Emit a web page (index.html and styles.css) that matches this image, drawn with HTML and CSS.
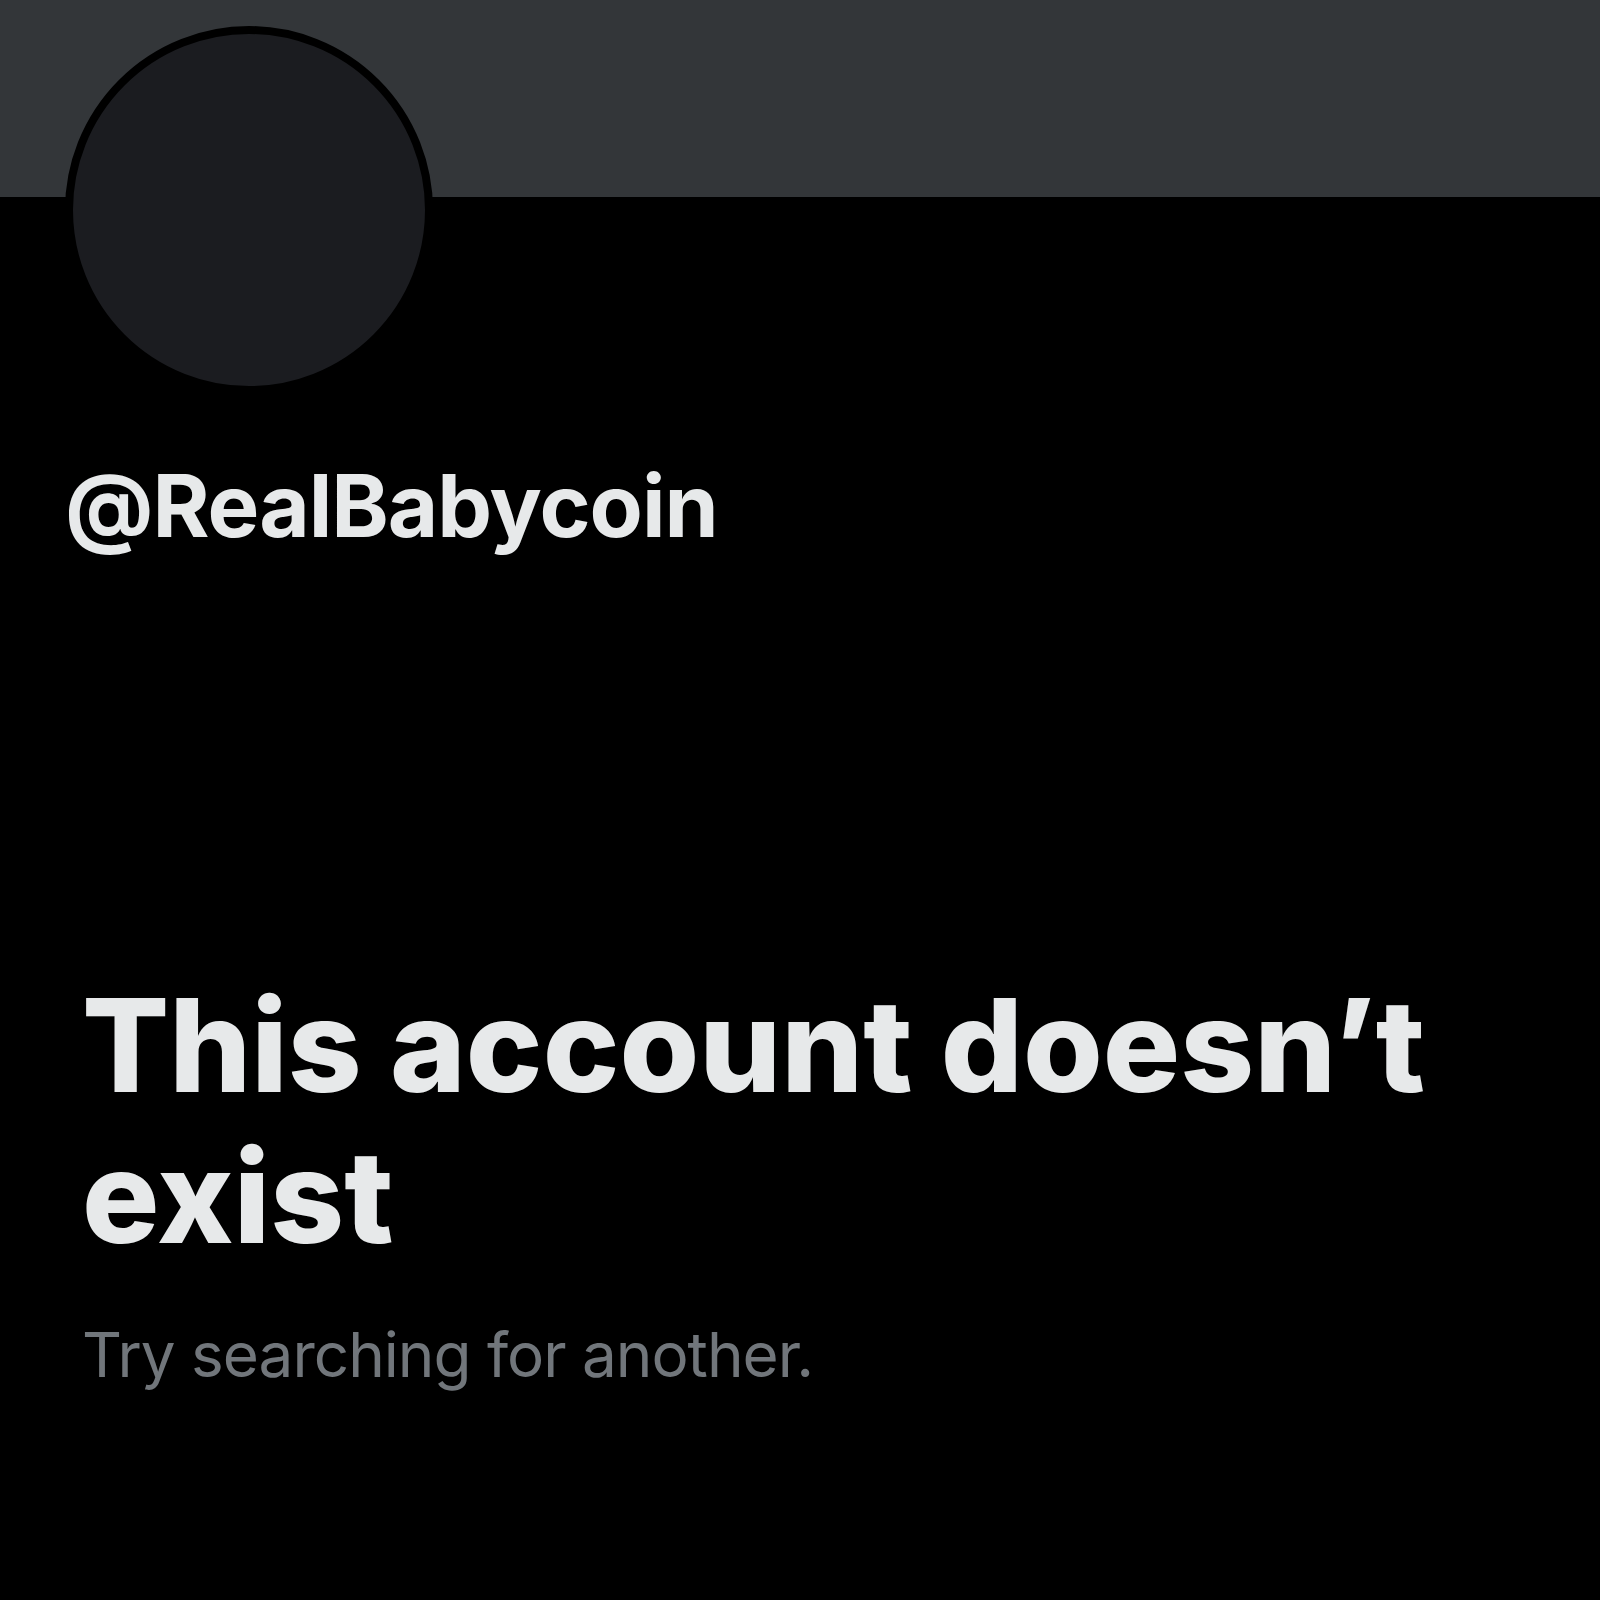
FILE: index.html
```html
<!DOCTYPE html>
<html lang="en">
<head>
<meta charset="utf-8">
<title>Profile</title>
<link rel="stylesheet" href="styles.css">
</head>
<body>
<div class="page">
  <div class="banner"></div>
  <div class="header">
    <div class="avatar"></div>
    <div class="handle">@RealBabycoin</div>
  </div>
  <div class="empty">
    <h1 class="title">This account doesn’t exist</h1>
    <p class="subtitle">Try searching for another.</p>
  </div>
</div>
</body>
</html>
```

FILE: styles.css
```css
html, body {
  margin: 0;
  padding: 0;
  background: #000;
}
.page {
  width: 1600px;
  min-height: 1600px;
  background: #000;
  font-family: Inter, "Noto Sans", sans-serif;
}
.banner {
  height: 197px;
  background: #333639;
}
.header {
  padding-left: 65px;
}
.avatar {
  width: 352px;
  height: 352px;
  margin-top: -171px;
  border-radius: 50%;
  background: #1b1c20;
  border: 8px solid #000;
}
.handle {
  margin-top: 57px;
  color: #e7e9ea;
  font-weight: 700;
  font-size: 87px;
  line-height: 110px;
  letter-spacing: -1px;
}
.empty {
  padding: 0 82px;
  margin-top: 409px;
}
.title {
  margin: 0;
  color: #e7e9ea;
  font-weight: 800;
  font-size: 129px;
  line-height: 151px;
  max-width: 1400px;
}
.subtitle {
  margin: 43px 0 0;
  color: #71767b;
  font-weight: 400;
  font-size: 62px;
  line-height: 80px;
  letter-spacing: -1px;
}
```
